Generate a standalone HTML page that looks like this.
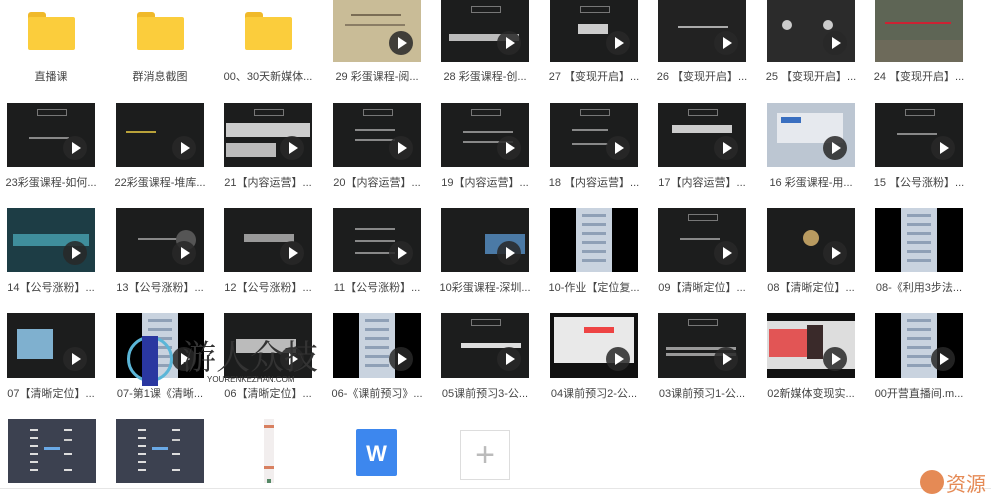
<!DOCTYPE html>
<html><head><meta charset="utf-8"><style>
body{margin:0;width:991px;height:497px;background:#fff;position:relative;overflow:hidden;font-family:"Liberation Sans","Noto Sans CJK SC",sans-serif}
.t{position:absolute;width:88px;height:64px;background:#1c1d1d;overflow:hidden}
.t .p{position:absolute;right:8px;bottom:7px;width:24px;height:24px;border-radius:50%;background:rgba(40,40,40,.85)}
.t .p:after{content:"";position:absolute;left:9px;top:6px;border-left:9px solid #fff;border-top:6px solid transparent;border-bottom:6px solid transparent}
.t .h{position:absolute;left:30px;top:6px;width:28px;height:5px;border:1px solid #777}
.t .l{position:absolute;left:22px;height:2px;background:#888}
.c{position:absolute;left:26px;right:26px;top:0;bottom:0;background:#c9d3df}
.c:before{content:"";position:absolute;left:6px;right:6px;top:6px;height:3px;background:#8fa0b6;box-shadow:0 9px #8fa0b6,0 18px #8fa0b6,0 27px #8fa0b6,0 36px #8fa0b6,0 45px #8fa0b6}
.lb{position:absolute;width:108px;text-align:center;font-size:11px;color:#444;white-space:nowrap}
.f{position:absolute;width:47px;height:38px}
.f:before{content:"";position:absolute;left:0;top:0;width:18px;height:8px;background:#f0b92a;border-radius:3px 3px 0 0}
.f:after{content:"";position:absolute;left:0;top:5px;width:47px;height:33px;background:#fbcd3c;border-radius:2px}
.m{position:absolute;width:88px;height:64px;background:#3c4150}
.m:before{content:"";position:absolute;left:36px;top:28px;width:16px;height:3px;background:#6aa9e6}
.m:after{content:"";position:absolute;left:22px;top:10px;width:8px;height:2px;background:#ddd;box-shadow:0 8px #ddd,0 16px #ddd,0 24px #ddd,0 32px #ddd,0 40px #ddd,34px 0 #ddd,34px 10px #ccc,34px 24px #ddd,34px 40px #ddd}
</style></head><body>
<!-- row 1 -->
<div class="f" style="left:28px;top:12px"></div>
<div class="f" style="left:137px;top:12px"></div>
<div class="f" style="left:245px;top:12px"></div>
<div class="t" style="left:333px;top:0;height:62px;background:#c9bc97"><div class="l" style="top:14px;left:18px;width:50px;background:#7a6d55"></div><div class="l" style="top:24px;left:12px;width:60px;background:#8a7d65"></div><div class="p"></div></div>
<div class="t" style="left:441px;top:0;height:62px"><div class="h"></div><div class="l" style="top:34px;left:8px;width:70px;height:7px;background:#bbb"></div><div class="p"></div></div>
<div class="t" style="left:550px;top:0;height:62px"><div class="h"></div><div class="l" style="top:24px;left:28px;width:30px;height:10px;background:#ccc"></div><div class="p"></div></div>
<div class="t" style="left:658px;top:0;height:62px;background:#222"><div class="l" style="top:26px;left:20px;width:50px;background:#aaa"></div><div class="p"></div></div>
<div class="t" style="left:767px;top:0;height:62px;background:#2b2b2b"><div class="l" style="top:20px;left:15px;width:10px;height:10px;background:#ccc;border-radius:50%"></div><div class="l" style="top:20px;left:56px;width:10px;height:10px;background:#ccc;border-radius:50%"></div><div class="p"></div></div>
<div class="t" style="left:875px;top:0;height:62px;background:#5e6555"><div class="l" style="top:22px;left:10px;width:66px;background:#c23"></div><div class="l" style="top:40px;left:0;width:88px;height:22px;background:#6d6a5a"></div></div>
<div class="lb" style="left:-3px;top:68px">直播课</div>
<div class="lb" style="left:106px;top:68px">群消息截图</div>
<div class="lb" style="left:214px;top:68px">00、30天新媒体...</div>
<div class="lb" style="left:323px;top:68px">29 彩蛋课程-阅...</div>
<div class="lb" style="left:431px;top:68px">28 彩蛋课程-创...</div>
<div class="lb" style="left:540px;top:68px">27 【变现开启】...</div>
<div class="lb" style="left:648px;top:68px">26 【变现开启】...</div>
<div class="lb" style="left:757px;top:68px">25 【变现开启】...</div>
<div class="lb" style="left:865px;top:68px">24 【变现开启】...</div>
<!-- row 2 -->
<div class="t" style="left:7px;top:103px"><div class="h"></div><div class="l" style="top:34px;width:40px"></div><div class="p"></div></div>
<div class="t" style="left:116px;top:103px"><div class="l" style="top:28px;left:10px;width:30px;background:#b9a23a"></div><div class="p"></div></div>
<div class="t" style="left:224px;top:103px"><div class="h"></div><div class="l" style="top:20px;left:2px;width:84px;height:14px;background:#ccc"></div><div class="l" style="top:40px;left:2px;width:50px;height:14px;background:#bbb"></div><div class="p"></div></div>
<div class="t" style="left:333px;top:103px"><div class="h"></div><div class="l" style="top:26px;width:40px"></div><div class="l" style="top:36px;width:40px"></div><div class="p"></div></div>
<div class="t" style="left:441px;top:103px"><div class="h"></div><div class="l" style="top:28px;width:50px"></div><div class="l" style="top:38px;width:50px"></div><div class="p"></div></div>
<div class="t" style="left:550px;top:103px"><div class="h"></div><div class="l" style="top:26px;width:36px"></div><div class="l" style="top:40px;width:36px"></div><div class="p"></div></div>
<div class="t" style="left:658px;top:103px"><div class="h"></div><div class="l" style="top:22px;left:14px;width:60px;height:8px;background:#ccc"></div><div class="p"></div></div>
<div class="t" style="left:767px;top:103px;background:#bcc6d2"><div class="l" style="top:10px;left:10px;width:66px;height:30px;background:#e6e9ee"></div><div class="l" style="top:14px;left:14px;width:20px;height:6px;background:#3a6fc0"></div><div class="p"></div></div>
<div class="t" style="left:875px;top:103px"><div class="h"></div><div class="l" style="top:30px;width:40px"></div><div class="p"></div></div>
<div class="lb" style="left:-3px;top:174px">23彩蛋课程-如何...</div>
<div class="lb" style="left:106px;top:174px">22彩蛋课程-堆库...</div>
<div class="lb" style="left:214px;top:174px">21【内容运营】...</div>
<div class="lb" style="left:323px;top:174px">20【内容运营】...</div>
<div class="lb" style="left:431px;top:174px">19【内容运营】...</div>
<div class="lb" style="left:540px;top:174px">18 【内容运营】...</div>
<div class="lb" style="left:648px;top:174px">17【内容运营】...</div>
<div class="lb" style="left:757px;top:174px">16 彩蛋课程-用...</div>
<div class="lb" style="left:865px;top:174px">15 【公号涨粉】...</div>
<!-- row 3 -->
<div class="t" style="left:7px;top:208px;background:#1d3d45"><div class="l" style="top:26px;left:6px;width:76px;height:12px;background:#3f8e9c"></div><div class="p"></div></div>
<div class="t" style="left:116px;top:208px"><div class="l" style="top:30px;width:40px"></div><div class="l" style="top:22px;left:60px;width:20px;height:20px;background:#555;border-radius:50%"></div><div class="p"></div></div>
<div class="t" style="left:224px;top:208px"><div class="l" style="top:26px;left:20px;width:50px;height:8px;background:#999"></div><div class="p"></div></div>
<div class="t" style="left:333px;top:208px"><div class="l" style="top:20px;width:40px"></div><div class="l" style="top:32px;width:40px"></div><div class="l" style="top:44px;width:40px"></div><div class="p"></div></div>
<div class="t" style="left:441px;top:208px"><div class="l" style="top:26px;left:44px;width:40px;height:20px;background:#4b7aa6"></div><div class="p"></div></div>
<div class="t" style="left:550px;top:208px;background:#000"><div class="c"></div></div>
<div class="t" style="left:658px;top:208px"><div class="h"></div><div class="l" style="top:30px;width:40px"></div><div class="p"></div></div>
<div class="t" style="left:767px;top:208px"><div class="l" style="top:22px;left:36px;width:16px;height:16px;background:#b89a60;border-radius:50%"></div><div class="p"></div></div>
<div class="t" style="left:875px;top:208px;background:#000"><div class="c"></div></div>
<div class="lb" style="left:-3px;top:279px">14【公号涨粉】...</div>
<div class="lb" style="left:106px;top:279px">13【公号涨粉】...</div>
<div class="lb" style="left:214px;top:279px">12【公号涨粉】...</div>
<div class="lb" style="left:323px;top:279px">11【公号涨粉】...</div>
<div class="lb" style="left:431px;top:279px">10彩蛋课程-深圳...</div>
<div class="lb" style="left:540px;top:279px">10-作业【定位复...</div>
<div class="lb" style="left:648px;top:279px">09【清晰定位】...</div>
<div class="lb" style="left:757px;top:279px">08【清晰定位】...</div>
<div class="lb" style="left:865px;top:279px">08-《利用3步法...</div>
<!-- row 4 -->
<div class="t" style="left:7px;top:313px;height:65px"><div class="l" style="top:16px;left:10px;width:36px;height:30px;background:#7fb0cf"></div><div class="p"></div></div>
<div class="t" style="left:116px;top:313px;height:65px;background:#000"><div class="c"></div><div class="p"></div></div>
<div class="t" style="left:224px;top:313px;height:65px"><div class="l" style="top:26px;left:12px;width:60px;height:14px;background:#bbb"></div><div class="p"></div></div>
<div class="t" style="left:333px;top:313px;height:65px;background:#000"><div class="c"></div><div class="p"></div></div>
<div class="t" style="left:441px;top:313px;height:65px"><div class="h"></div><div class="l" style="top:30px;left:20px;width:60px;height:5px;background:#ddd"></div><div class="p"></div></div>
<div class="t" style="left:550px;top:313px;height:65px;background:#111"><div class="l" style="top:4px;left:4px;width:80px;height:46px;background:#e9e9e9"></div><div class="l" style="top:14px;left:34px;width:30px;height:6px;background:#e44"></div><div class="p"></div></div>
<div class="t" style="left:658px;top:313px;height:65px"><div class="h"></div><div class="l" style="top:34px;left:8px;width:70px;height:3px;background:#999"></div><div class="l" style="top:40px;left:8px;width:70px;height:3px;background:#999"></div><div class="p"></div></div>
<div class="t" style="left:767px;top:313px;height:65px;background:#ddd"><div class="l" style="top:0;left:0;width:88px;height:8px;background:#111"></div><div class="l" style="top:56px;left:0;width:88px;height:9px;background:#111"></div><div class="l" style="top:16px;left:2px;width:38px;height:28px;background:#e25555"></div><div class="l" style="top:12px;left:40px;width:16px;height:34px;background:#3a2a2a"></div><div class="p"></div></div>
<div class="t" style="left:875px;top:313px;height:65px;background:#000"><div class="c"></div><div class="p"></div></div>
<div class="lb" style="left:-3px;top:385px">07【清晰定位】...</div>
<div class="lb" style="left:106px;top:385px">07-第1课《清晰...</div>
<div class="lb" style="left:214px;top:385px">06【清晰定位】...</div>
<div class="lb" style="left:323px;top:385px">06-《课前预习》...</div>
<div class="lb" style="left:431px;top:385px">05课前预习3-公...</div>
<div class="lb" style="left:540px;top:385px">04课前预习2-公...</div>
<div class="lb" style="left:648px;top:385px">03课前预习1-公...</div>
<div class="lb" style="left:757px;top:385px">02新媒体变现实...</div>
<div class="lb" style="left:865px;top:385px">00开营直播间.m...</div>
<!-- watermark -->
<div style="position:absolute;left:127px;top:336px;width:46px;height:46px;border:3px solid #5bb6d8;border-radius:50%;box-sizing:border-box"></div>
<div style="position:absolute;left:142px;top:336px;width:16px;height:50px;background:#2a37a0"></div>
<div style="position:absolute;left:182px;top:330px;font-size:34px;color:#333;font-family:'Noto Serif CJK SC',serif">游人众技</div>
<div style="position:absolute;left:207px;top:375px;font-size:8px;color:#333">YOURENKEZHAN.COM</div>
<!-- row 5 -->
<div class="m" style="left:8px;top:419px"></div>
<div class="m" style="left:116px;top:419px"></div>
<div style="position:absolute;left:264px;top:419px;width:10px;height:64px;background:#f2eeee"><div style="position:absolute;top:6px;width:10px;height:3px;background:#d88060"></div><div style="position:absolute;top:47px;width:10px;height:3px;background:#d88060"></div><div style="position:absolute;top:60px;left:3px;width:4px;height:4px;background:#586"></div></div>
<div style="position:absolute;left:356px;top:429px;width:41px;height:47px;background:#3d87ee;border-radius:2px;color:#fff;font-weight:bold;font-size:22px;text-align:center;line-height:50px">W</div>
<div style="position:absolute;left:460px;top:430px;width:50px;height:50px;border:1px solid #ddd;box-sizing:border-box;color:#bbb;font-size:34px;text-align:center;line-height:48px;font-weight:300">+</div>
<div style="position:absolute;left:0;top:488px;width:991px;height:1px;background:#e6e6e6"></div>
<div style="position:absolute;left:920px;top:470px;width:24px;height:24px;border-radius:50%;background:#e58a55"></div>
<div style="position:absolute;left:946px;top:468px;font-size:20px;color:#e58a55">资源</div>
</body></html>
